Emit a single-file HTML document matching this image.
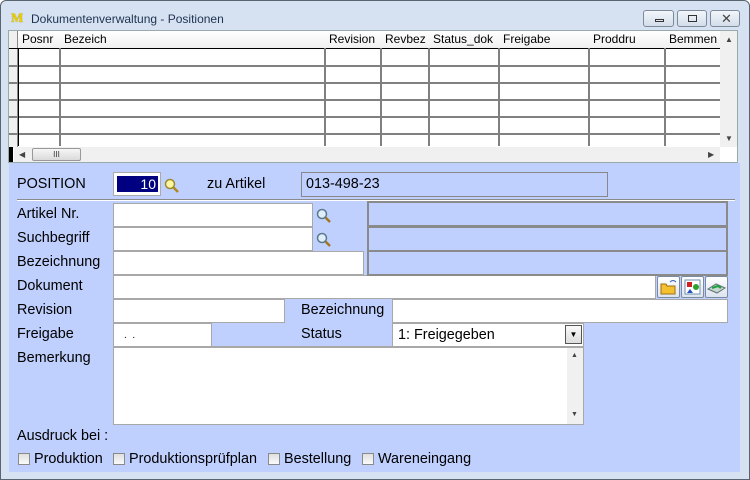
<!DOCTYPE html>
<html><head><meta charset="utf-8"><style>
*{margin:0;padding:0;box-sizing:border-box}
body{width:750px;height:480px;background:#fff;font-family:"Liberation Sans",Arial,sans-serif;position:relative;overflow:hidden}
.a{position:absolute}
.win{left:0;top:0;width:750px;height:480px;border:1px solid #5a6470;border-radius:6px 6px 0 0;background:#d6e2f1}
.t{font-size:12px;color:#1e3250}
.gh{font-size:12px;color:#000;top:32px}
.vl{width:2px;background:#808080;top:48px;height:98px}
.hl{height:2px;background:#808080;left:18px;width:702px}
.lb{font-size:14.4px;color:#000}
.in{background:#fff;border:1px solid #a8a8a8}
.bx{border:2px solid #8a8a8a;border-top-color:#8a8a8a;background:#bfd0fe}
.cb{width:12px;height:12px;border:1px solid #8a8a8a;background:linear-gradient(#e0e0e0,#fafafa);top:453px}
.ib{width:23px;height:22px;border:1px solid #7a8aa0;border-radius:2px;background:linear-gradient(#fff,#dde4ee);top:276px}
.btn{top:10px;height:17px;border:1px solid #7d8a9a;border-radius:3px;background:linear-gradient(#f2f6fb,#d3dde9)}
</style></head><body>
<div class="a win"></div>
<div class="a" style="left:11px;top:10px;font:bold 13px 'Liberation Serif',serif;color:#e8d000;text-shadow:0 0 1px #a08000">M</div>
<div class="a t" style="left:31px;top:12px">Dokumentenverwaltung - Positionen</div>
<div class="a btn" style="left:643px;width:31px"><div class="a" style="left:11px;top:8px;width:9px;height:3px;border:1px solid #333"></div></div>
<div class="a btn" style="left:677px;width:30px"><div class="a" style="left:10px;top:4px;width:9px;height:7px;border:1px solid #333"></div></div>
<div class="a btn" style="left:710px;width:30px"><div class="a" style="left:10px;top:0px;font-size:13px;color:#444">✕</div></div>
<!-- grid -->
<div class="a" style="left:8px;top:30px;width:730px;height:133px;background:#fff;border:1px solid #9aa"></div>
<div class="a" style="left:9px;top:31px;width:711px;height:17px;background:linear-gradient(#fff,#f0f0f0)"></div>
<div class="a" style="left:9px;top:31px;width:9px;height:117px;background:#f0f0f0;border-right:1px solid #888"></div>
<div class="a" style="left:9px;top:147px;width:4px;height:15px;background:#000"></div>
<div class="a" style="left:9px;top:48px;width:711px;height:1px;background:#000"></div>
<div class="a hl" style="left:9px;width:711px;top:65px"></div>
<div class="a hl" style="left:9px;width:711px;top:82px"></div>
<div class="a hl" style="left:9px;width:711px;top:99px"></div>
<div class="a hl" style="left:9px;width:711px;top:116px"></div>
<div class="a hl" style="left:9px;width:711px;top:133px"></div>
<div class="a vl" style="left:59px"></div><div class="a vl" style="left:324px"></div><div class="a vl" style="left:380px"></div><div class="a vl" style="left:428px"></div><div class="a vl" style="left:498px"></div><div class="a vl" style="left:588px"></div><div class="a vl" style="left:664px"></div>
<div class="a vl" style="left:18px;width:1px;background:#000"></div>
<div class="a gh" style="left:22px">Posnr</div><div class="a gh" style="left:64px">Bezeich</div><div class="a gh" style="left:329px">Revision</div><div class="a gh" style="left:385px">Revbez</div><div class="a gh" style="left:433px">Status_dok</div><div class="a gh" style="left:503px">Freigabe</div><div class="a gh" style="left:593px">Proddru</div><div class="a gh" style="left:669px">Bemmen</div>
<div class="a" style="left:720px;top:31px;width:17px;height:116px;background:#f0f0f0"></div>
<div class="a" style="left:725px;top:35px;font-size:8px;color:#444">▲</div>
<div class="a" style="left:725px;top:134px;font-size:8px;color:#444">▼</div>
<div class="a" style="left:14px;top:147px;width:706px;height:15px;background:#f0f0f0"></div>
<div class="a" style="left:19px;top:150px;font-size:8px;color:#444">◀</div>
<div class="a" style="left:708px;top:150px;font-size:8px;color:#444">▶</div>
<div class="a" style="left:32px;top:148px;width:49px;height:13px;border:1px solid #999;border-radius:2px;background:linear-gradient(#f6f6f6,#dadada);font-size:8px;text-align:center;line-height:11px;color:#333">III</div>
<!-- form -->
<div class="a" style="left:9px;top:163px;width:731px;height:309px;background:#bfd0fe"></div>
<div class="a lb" style="left:17px;top:176px">POSITION</div>
<div class="a" style="left:113px;top:172px;width:48px;height:24px;border:1px solid #aaa;background:#fff"><div class="a" style="left:3px;top:3px;width:41px;height:16px;background:#000080;color:#fff;font-size:14px;text-align:right;padding-right:2px">10</div></div>
<svg class="a" style="left:164px;top:178px" width="16" height="16"><circle cx="6" cy="6" r="4.5" fill="#fff6a0" stroke="#9a8a30" stroke-width="1.5"/><path d="M9.5 9.5 14 14" stroke="#b08a20" stroke-width="2.5"/></svg>
<div class="a lb" style="left:207px;top:176px">zu Artikel</div>
<div class="a" style="left:301px;top:172px;width:307px;height:25px;border:1px solid #888;font-size:14.4px;padding:3px 4px">013-498-23</div>
<div class="a" style="left:17px;top:199px;width:718px;height:1px;background:#8a8a8a"></div>
<div class="a" style="left:17px;top:200px;width:718px;height:1px;background:#fff"></div>
<div class="a lb" style="left:17px;top:206px">Artikel Nr.</div>
<div class="a lb" style="left:17px;top:230px">Suchbegriff</div>
<div class="a lb" style="left:17px;top:254px">Bezeichnung</div>
<div class="a lb" style="left:17px;top:278px">Dokument</div>
<div class="a lb" style="left:17px;top:302px">Revision</div>
<div class="a lb" style="left:17px;top:326px">Freigabe</div>
<div class="a lb" style="left:17px;top:350px">Bemerkung</div>
<div class="a in" style="left:113px;top:203px;width:200px;height:24px"></div>
<div class="a in" style="left:113px;top:227px;width:200px;height:24px"></div>
<div class="a in" style="left:113px;top:251px;width:251px;height:24px"></div>
<div class="a in" style="left:113px;top:275px;width:543px;height:24px"></div>
<div class="a in" style="left:113px;top:299px;width:172px;height:24px"></div>
<div class="a in" style="left:113px;top:323px;width:99px;height:24px;font-size:10px;padding:6px 10px">.&nbsp;&nbsp;.</div>
<div class="a in" style="left:113px;top:347px;width:471px;height:78px"></div>
<div class="a" style="left:567px;top:348px;width:16px;height:76px;background:#f0f0f0"></div>
<div class="a" style="left:571px;top:352px;font-size:7px;color:#444">▲</div>
<div class="a" style="left:571px;top:411px;font-size:7px;color:#444">▼</div>
<svg class="a" style="left:316px;top:208px" width="16" height="16"><circle cx="6" cy="6" r="4.5" fill="#dfeefa" stroke="#5a7a90" stroke-width="1.5"/><path d="M9.5 9.5 14 14" stroke="#a07820" stroke-width="2.5"/></svg>
<svg class="a" style="left:316px;top:232px" width="16" height="16"><circle cx="6" cy="6" r="4.5" fill="#dfeefa" stroke="#5a7a90" stroke-width="1.5"/><path d="M9.5 9.5 14 14" stroke="#a07820" stroke-width="2.5"/></svg>
<div class="a bx" style="left:367px;top:201px;width:361px;height:26px"></div>
<div class="a bx" style="left:367px;top:226px;width:361px;height:26px"></div>
<div class="a bx" style="left:367px;top:250px;width:361px;height:26px"></div>
<div class="a ib" style="left:657px"><svg width="21" height="20"><path d="M3 7h5l1 2h8v8H3z" fill="#f4c030" stroke="#a07010"/><path d="M12 5q3-3 6 0" stroke="#3060c0" fill="none"/></svg></div>
<div class="a ib" style="left:681px"><svg width="21" height="20"><rect x="3" y="3" width="15" height="14" fill="#fff" stroke="#7090b0"/><rect x="5" y="5" width="5" height="5" fill="#d02020"/><circle cx="14" cy="10" r="3" fill="#30a030"/><path d="M5 16l3-4 3 4z" fill="#2050c0"/></svg></div>
<div class="a ib" style="left:705px"><svg width="21" height="20"><path d="M2 12l8-5 9 4-8 5z" fill="#c8d8d0" stroke="#607070"/><path d="M6 11l6-2 3 2" stroke="#20a040" stroke-width="2" fill="none"/></svg></div>
<div class="a lb" style="left:301px;top:302px">Bezeichnung</div>
<div class="a in" style="left:392px;top:299px;width:336px;height:24px"></div>
<div class="a lb" style="left:301px;top:326px">Status</div>
<div class="a" style="left:211px;top:323px;width:182px;height:24px;border-bottom:1px solid #a8a8a8"></div>
<div class="a in" style="left:392px;top:323px;width:192px;height:24px;font-size:14.4px;padding:3px 5px">1: Freigegeben</div>
<div class="a" style="left:565px;top:325px;width:17px;height:19px;border:1px solid #555;background:linear-gradient(#fafafa,#ddd);font-size:8px;text-align:center;line-height:17px">▼</div>
<div class="a lb" style="left:17px;top:428px">Ausdruck bei :</div>
<div class="a cb" style="left:18px"></div><div class="a lb" style="left:34px;top:451px">Produktion</div>
<div class="a cb" style="left:113px"></div><div class="a lb" style="left:129px;top:451px">Produktionsprüfplan</div>
<div class="a cb" style="left:268px"></div><div class="a lb" style="left:284px;top:451px">Bestellung</div>
<div class="a cb" style="left:362px"></div><div class="a lb" style="left:378px;top:451px">Wareneingang</div>
</body></html>
